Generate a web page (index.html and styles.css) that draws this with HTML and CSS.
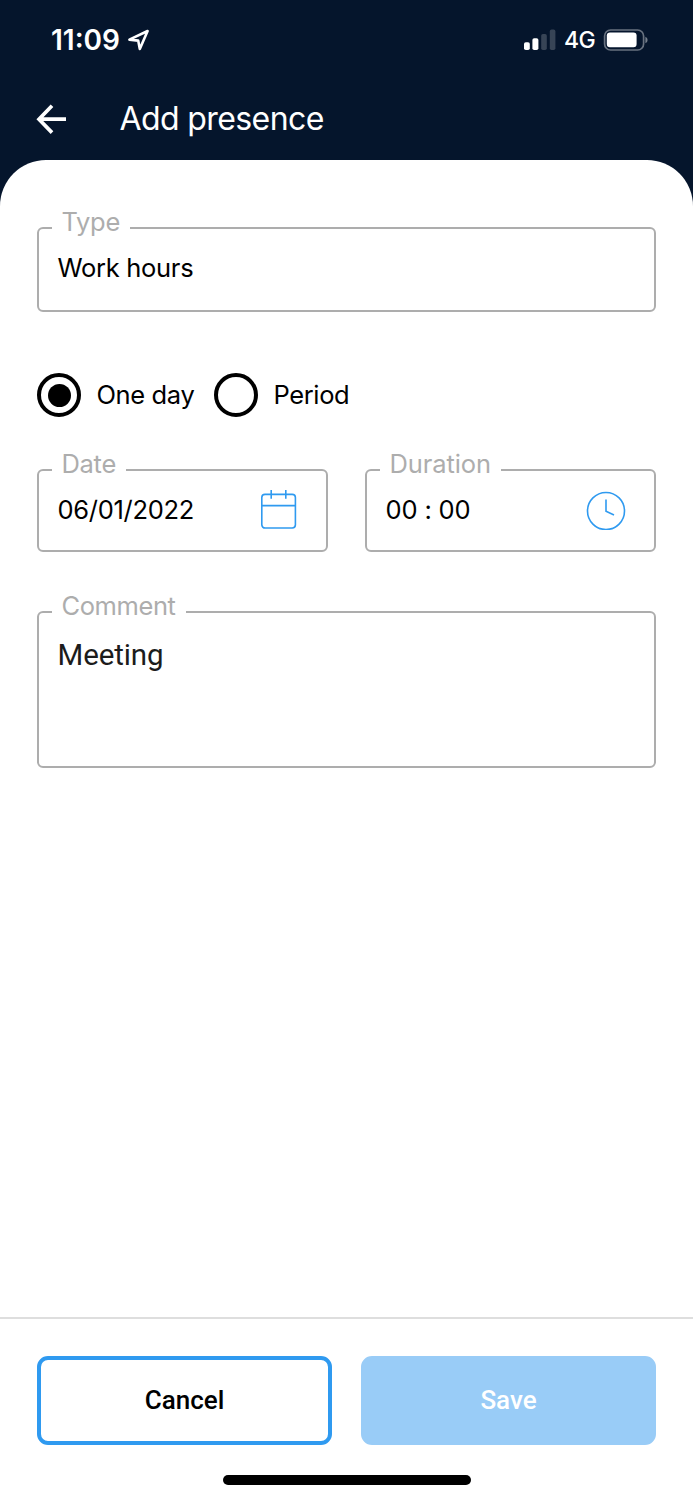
FILE: index.html
```html
<!DOCTYPE html>
<html lang="en">
<head>
<meta charset="utf-8">
<title>Add presence</title>
<link rel="stylesheet" href="styles.css">
</head>
<body>
<div class="screen">
  <div class="status">
    <span class="time">11:09</span>
    <svg class="location" width="24" height="24" viewBox="0 0 24 24"><path d="M2.4 11.6 20.6 3 12.8 21 11.2 12.6Z" fill="none" stroke="#fff" stroke-width="2.6" stroke-linejoin="round"/></svg>
    <svg class="signal" width="32" height="22" viewBox="0 0 32 22" fill="#fff"><rect x="0" y="13.3" width="5.8" height="7.7" rx="1.8"/><rect x="8.4" y="9.2" width="6" height="11.8" rx="1.8"/><g opacity=".2"><rect x="17.2" y="5" width="5.6" height="16" rx="1.8"/><rect x="25.8" y="0.6" width="5.6" height="20.4" rx="1.8"/></g></svg>
    <span class="network">4G</span>
    <svg class="battery" width="46" height="22" viewBox="0 0 46 22"><rect x="1.6" y="1" width="39" height="20" rx="6" fill="none" stroke="#fff" stroke-opacity=".4" stroke-width="1.7"/><rect x="3.8" y="3.4" width="29.8" height="14.8" rx="3.2" fill="#fff"/><path d="M42.4 7.8Q44.6 8.8 44.6 11T42.4 14.2Z" fill="#fff" opacity=".45"/></svg>
  </div>
  <header class="header">
    <svg class="back" width="32" height="32" viewBox="0 0 32 32"><path d="M16 2.8 3 16.2 16 29.6M3.5 16.2H30" fill="none" stroke="#fff" stroke-width="3.7"/></svg>
    <h1 class="title">Add presence</h1>
  </header>
  <main class="sheet">
    <fieldset class="field type">
      <legend class="label">Type</legend>
      <div class="value">Work hours</div>
    </fieldset>
    <div class="radios">
      <span class="radio checked"></span><span class="radio-text one-day">One day</span>
      <span class="radio"></span><span class="radio-text">Period</span>
    </div>
    <div class="pair">
      <fieldset class="field half">
        <legend class="label">Date</legend>
        <div class="value"><span>06/01/2022</span>
          <svg class="calendar" width="38" height="40" viewBox="0 0 38 40" fill="none" stroke="#2f9af0" stroke-width="1.6"><rect x="1.8" y="4.4" width="33.6" height="33.6" rx="3.2"/><path d="M2 15.6H35.2M11.2 0V8.8M25.8 0V8.8"/></svg>
        </div>
      </fieldset>
      <fieldset class="field half">
        <legend class="label label-duration">Duration</legend>
        <div class="value value-time"><span>00 : 00</span>
          <svg class="clock" width="40" height="40" viewBox="0 0 40 40" fill="none" stroke="#2f9af0" stroke-width="1.6"><circle cx="20" cy="21" r="18.5"/><path d="M20 9.4V21.2L28 25"/></svg>
        </div>
      </fieldset>
    </div>
    <fieldset class="field comment">
      <legend class="label label-comment">Comment</legend>
      <div class="value value-comment">Meeting</div>
    </fieldset>
  </main>
  <footer class="footer">
    <div class="actions">
      <button class="button cancel">Cancel</button>
      <button class="button save">Save</button>
    </div>
    <div class="home"></div>
  </footer>
</div>
</body>
</html>
```
FILE: styles.css
```css
* { box-sizing: border-box; }
body { margin: 0; background: #05152c; font-family: Inter, sans-serif; color: #000; }
svg { display: block; flex: none; }
.screen { height: 1500px; display: flex; flex-direction: column; overflow: hidden; }
.status { height: 80px; display: flex; align-items: center; padding: 0 44px 0 51px; color: #fff; white-space: nowrap; }
.time { font-size: 28px; font-weight: 600; width: 76px; }
.signal { margin-left: auto; }
.network { font-size: 23px; font-weight: 500; letter-spacing: -.6px; width: 31px; margin: 0 8px 0 8px; }
.header { height: 80px; display: flex; align-items: center; padding: 0 36px 3px; color: #fff; }
.title { margin: 0 0 0 51.5px; font-size: 32px; font-weight: 400; letter-spacing: -.6px; }
.sheet { flex: 1; background: #fff; border-radius: 46px 46px 0 0; padding: 48px 37px 0; }
.field { margin: 0; padding: 0 18.5px; border: 2px solid #adadad; border-radius: 6px; min-width: 0; }
.type { height: 104px; }
.label { margin-left: -5.5px; padding: 0 10px 12px 9.5px; line-height: 28px; font-size: 25.5px; letter-spacing: -.3px; color: #adadad; white-space: nowrap; }
.label-duration { letter-spacing: -.1px; }
.value { height: 40px; display: flex; align-items: center; justify-content: space-between; font-size: 25.5px; letter-spacing: -.3px; line-height: 30px; white-space: nowrap; }
.value span, .type .value { padding-bottom: 1px; }
.value-time { letter-spacing: -.15px; }
.radios { margin-top: 61px; height: 44px; display: flex; align-items: center; }
.radio { width: 44px; height: 44px; flex: none; border: 4px solid #000; border-radius: 50%; display: grid; place-items: center; }
.checked::after { content: ""; width: 23px; height: 23px; border-radius: 50%; background: #000; }
.radio-text { margin-left: 15.5px; padding-bottom: 2px; font-size: 25.5px; letter-spacing: -.38px; white-space: nowrap; }
.one-day { width: 117.5px; }
.pair { margin-top: 33px; display: flex; gap: 37px; }
.half { flex: 1; height: 102px; }
.calendar { margin-right: 10px; }
.clock { margin-right: 9.5px; }
.comment { margin-top: 40px; height: 176px; }
.label-comment { letter-spacing: -.4px; }
.value-comment { height: 44px; font-family: Roboto, sans-serif; font-size: 29.5px; letter-spacing: -.1px; padding-top: 1px; color: #1c1c1c; }
.footer { height: 183px; background: #fff; border-top: 2px solid #dedede; padding: 37px 37px 0; }
.actions { display: flex; gap: 29px; }
.button { flex: 1 1 0; width: 0; min-width: 0; height: 89px; padding: 0 0 2px; border: 4px solid transparent; border-radius: 11px; font: 500 26px Roboto, sans-serif; }
.cancel { background: #fff; color: #000; border-color: #2f9af0; }
.save { background: #99ccf7; border-color: #99ccf7; color: #fff; }
.home { width: 248px; height: 10px; border-radius: 5px; background: #000; margin: 30px auto 0; }
```
